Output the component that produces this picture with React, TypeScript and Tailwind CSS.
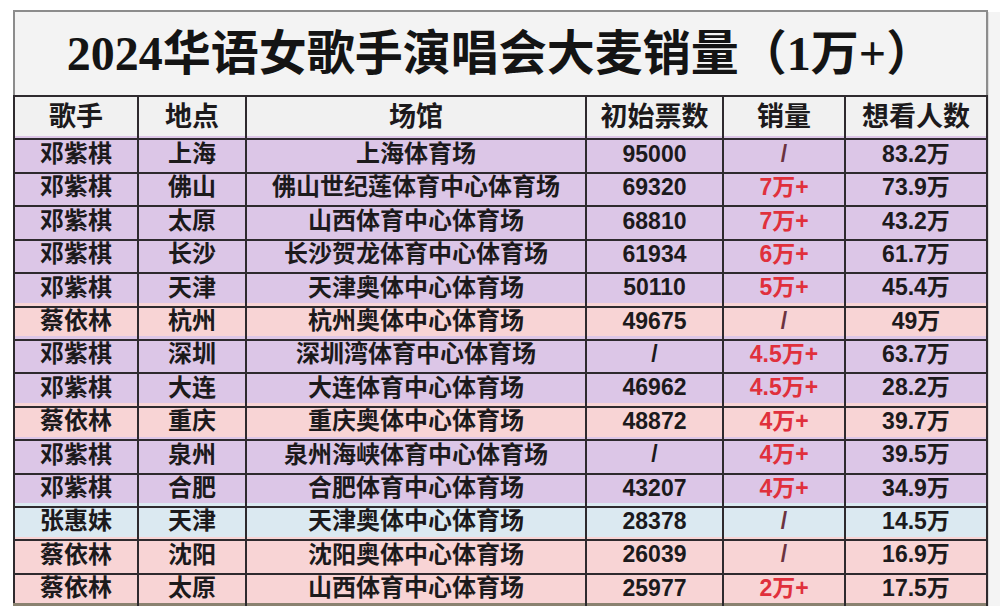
import React from "react";

type Row = {
  singer: string;
  city: string;
  venue: string;
  tickets: string;
  sales: string;
  want: string;
  tone: "purple" | "pink" | "blue";
};

const rows: Row[] = [
  { singer: "邓紫棋", city: "上海", venue: "上海体育场", tickets: "95000", sales: "/", want: "83.2万", tone: "purple" },
  { singer: "邓紫棋", city: "佛山", venue: "佛山世纪莲体育中心体育场", tickets: "69320", sales: "7万+", want: "73.9万", tone: "purple" },
  { singer: "邓紫棋", city: "太原", venue: "山西体育中心体育场", tickets: "68810", sales: "7万+", want: "43.2万", tone: "purple" },
  { singer: "邓紫棋", city: "长沙", venue: "长沙贺龙体育中心体育场", tickets: "61934", sales: "6万+", want: "61.7万", tone: "purple" },
  { singer: "邓紫棋", city: "天津", venue: "天津奥体中心体育场", tickets: "50110", sales: "5万+", want: "45.4万", tone: "purple" },
  { singer: "蔡依林", city: "杭州", venue: "杭州奥体中心体育场", tickets: "49675", sales: "/", want: "49万", tone: "pink" },
  { singer: "邓紫棋", city: "深圳", venue: "深圳湾体育中心体育场", tickets: "/", sales: "4.5万+", want: "63.7万", tone: "purple" },
  { singer: "邓紫棋", city: "大连", venue: "大连体育中心体育场", tickets: "46962", sales: "4.5万+", want: "28.2万", tone: "purple" },
  { singer: "蔡依林", city: "重庆", venue: "重庆奥体中心体育场", tickets: "48872", sales: "4万+", want: "39.7万", tone: "pink" },
  { singer: "邓紫棋", city: "泉州", venue: "泉州海峡体育中心体育场", tickets: "/", sales: "4万+", want: "39.5万", tone: "purple" },
  { singer: "邓紫棋", city: "合肥", venue: "合肥体育中心体育场", tickets: "43207", sales: "4万+", want: "34.9万", tone: "purple" },
  { singer: "张惠妹", city: "天津", venue: "天津奥体中心体育场", tickets: "28378", sales: "/", want: "14.5万", tone: "blue" },
  { singer: "蔡依林", city: "沈阳", venue: "沈阳奥体中心体育场", tickets: "26039", sales: "/", want: "16.9万", tone: "pink" },
  { singer: "蔡依林", city: "太原", venue: "山西体育中心体育场", tickets: "25977", sales: "2万+", want: "17.5万", tone: "pink" },
];

const toneBg = {
  purple: "bg-[#dcc6e7]",
  pink: "bg-[#f8d4d5]",
  blue: "bg-[#dbe9f1]",
};

const cols = "grid grid-cols-[124px_108px_340px_137px_122px_142px]";
const cell = "flex items-center justify-center border-r-2 border-b-2 border-[#2e2a2e]";

const App = () => {
  return (
    <div className="w-[1000px] h-[606px] overflow-hidden bg-white pt-[10px] font-['Liberation_Sans','Noto_Sans_CJK_SC',sans-serif] text-[#1c1a1c]">
      <div className="flex">
        <div className="w-[13px] shrink-0" />
        <div className="w-[975px] shrink-0">
          <div className="h-[85px] flex items-center justify-center border-2 border-b-0 border-[#8c8c8c] bg-[#f3f3f3]">
            <h1 className="text-[48px] font-bold leading-none text-[#141414] font-['Liberation_Serif','Noto_Sans_CJK_SC',serif]">
              2024华语女歌手演唱会大麦销量（1万+）
            </h1>
          </div>
          <div className="border-l-2 border-t-2 border-[#2e2a2e]">
            <div className={`${cols} h-[39px] bg-[#f1f1f1] text-[27px] font-bold`}>
              <div className={cell}>歌手</div>
              <div className={cell}>地点</div>
              <div className={cell}>场馆</div>
              <div className={cell}>初始票数</div>
              <div className={cell}>销量</div>
              <div className={cell}>想看人数</div>
            </div>
            {rows.map((r, i) => (
              <div key={i} className={`${cols} h-[33.4px] font-bold ${toneBg[r.tone]}`}>
                <div className={`${cell} text-[24px]`}>{r.singer}</div>
                <div className={`${cell} text-[24px]`}>{r.city}</div>
                <div className={`${cell} text-[24px]`}>{r.venue}</div>
                <div className={`${cell} text-[23px]`}>{r.tickets}</div>
                <div className={`${cell} text-[23px] ${r.sales === "/" ? "text-[#6b3340]" : "text-[#e0303c]"}`}>{r.sales}</div>
                <div className={`${cell} text-[23px]`}>{r.want}</div>
              </div>
            ))}
          </div>
          <div className="h-[4px] bg-[#8a8270]" />
        </div>
        <div className="flex-1 mt-[2px] bg-[#f4f4f4] border-l border-[#dcdcdc]" />
      </div>
    </div>
  );
};

export default App;
